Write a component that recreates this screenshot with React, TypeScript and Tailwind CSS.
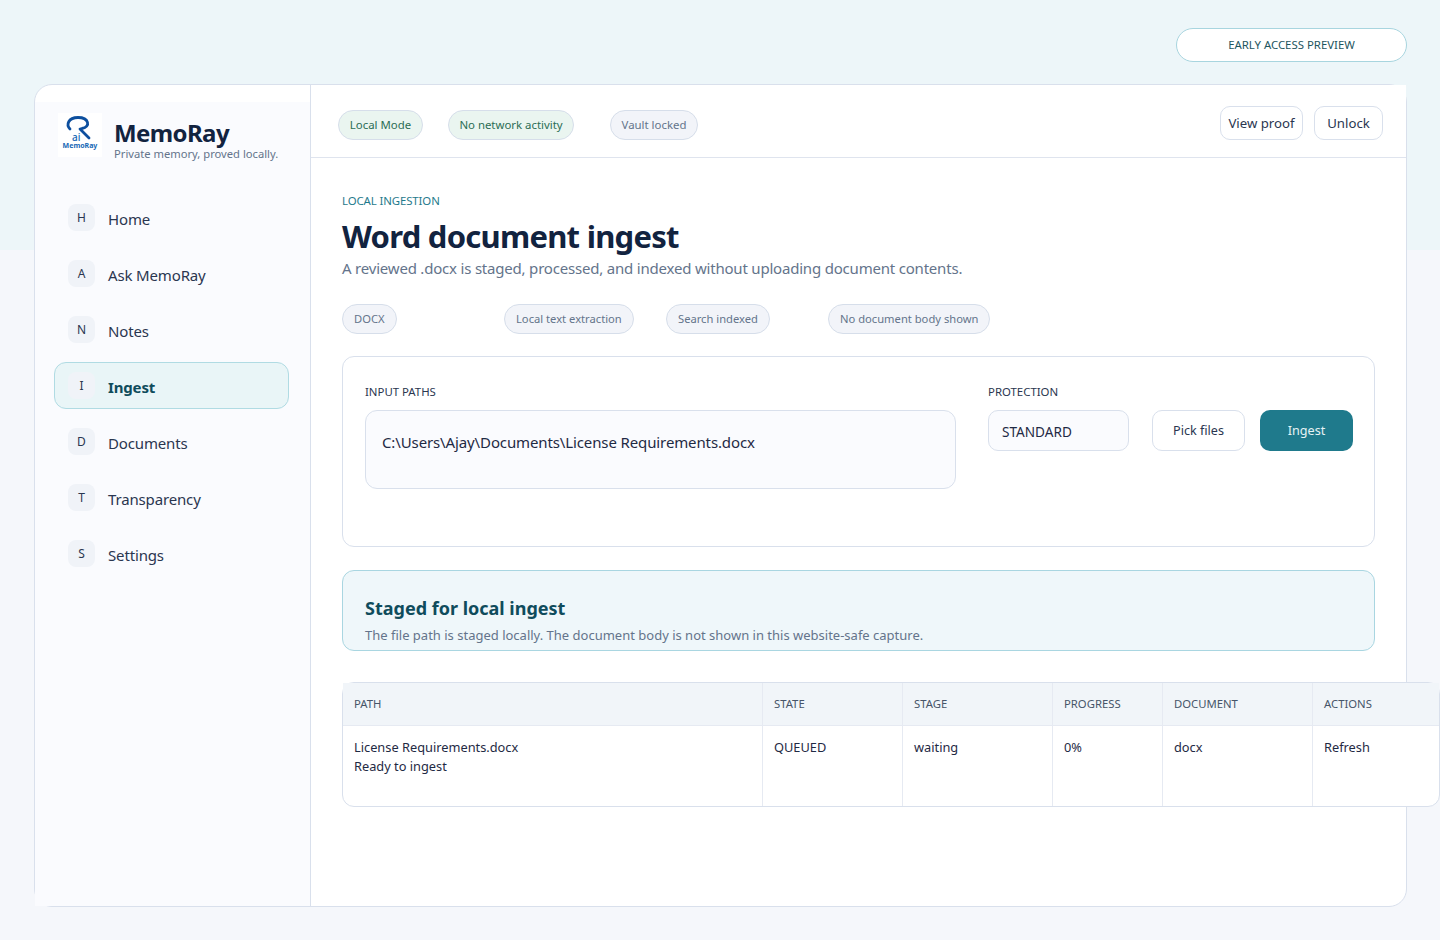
const font = { fontFamily: '"Noto Sans", "Open Sans", sans-serif' };

const navItems = [
  { key: "H", label: "Home" },
  { key: "A", label: "Ask MemoRay" },
  { key: "N", label: "Notes" },
  { key: "I", label: "Ingest", active: true },
  { key: "D", label: "Documents" },
  { key: "T", label: "Transparency" },
  { key: "S", label: "Settings" },
];

const chips = ["DOCX", "Local text extraction", "Search indexed", "No document body shown"];

const columns = [
  { head: "PATH", w: "w-[419px]" },
  { head: "STATE", w: "w-[140px]" },
  { head: "STAGE", w: "w-[150px]" },
  { head: "PROGRESS", w: "w-[110px]" },
  { head: "DOCUMENT", w: "w-[150px]" },
  { head: "ACTIONS", w: "flex-1" },
];

function Logo() {
  return (
    <svg viewBox="0 0 44 44" className="h-[44px] w-[44px] shrink-0 bg-white">
      <path
        d="M12 16 C8 12 10 4.5 20 4.5 C31 4.5 33 14 24 15.5 L22 16 L31 25"
        fill="none"
        stroke="#0d4f9e"
        strokeWidth="2.8"
        strokeLinecap="round"
        strokeLinejoin="round"
      />
      <text x="14" y="28" fontSize="10" fontWeight="500" fill="#1567b5" style={font}>
        ai
      </text>
      <text x="22" y="35" fontSize="7" fontWeight="700" fill="#1567b5" textAnchor="middle" style={font}>
        MemoRay
      </text>
    </svg>
  );
}

function Sidebar() {
  return (
    <aside className="flex w-[276px] shrink-0 flex-col border-r border-[#d9e0ec] pt-[17px]">
      <div className="flex-1 bg-[#fafbfe] pl-[19px] pr-[21px]">
        <div className="flex items-start pl-[4px] pt-[11px]">
          <Logo />
          <div className="ml-[12px]">
            <div className="mt-[4px] text-[24px] leading-[32px] font-bold tracking-[-0.6px] text-[#12233f]">MemoRay</div>
            <div className="-mt-[2px] whitespace-nowrap text-[11.2px] leading-[14px] text-[#64748b]">
              Private memory, proved locally.
            </div>
          </div>
        </div>
        <nav className="mt-[33px] flex flex-col gap-[9px]">
          {navItems.map((item) => (
            <div
              key={item.key}
              className={`flex h-[47px] items-center rounded-[12px] border pl-[13px] ${
                item.active ? "border-[#b0dbe3] bg-[#e9f5f7]" : "border-transparent"
              }`}
            >
              <span className="flex h-[27px] w-[27px] items-center justify-center rounded-[8px] bg-[#f0f3f8] text-[12px] text-[#2a3650]">
                {item.key}
              </span>
              <span
                className={`ml-[13px] mt-[3px] text-[15px] tracking-[-0.15px] ${
                  item.active ? "font-bold text-[#0f4c5c]" : "text-[#2a3650]"
                }`}
              >
                {item.label}
              </span>
            </div>
          ))}
        </nav>
      </div>
    </aside>
  );
}

function TopBar() {
  return (
    <header className="flex h-[73px] items-start justify-between border-b border-[#dfe4ee] bg-white pl-[27px] pr-[23px] pt-[21px]">
      <div className="mt-[4px] grid grid-cols-[110px_162px_auto] justify-items-start">
        <span className="flex h-[30px] w-[85px] items-center justify-center rounded-full border border-[#d6deea] bg-[#eaf5f0] text-[11.4px] text-[#2c6e55]">
          Local Mode
        </span>
        <span className="flex h-[30px] w-[126px] items-center justify-center rounded-full border border-[#d6deea] bg-[#eaf5f0] text-[11.4px] text-[#2c6e55]">
          No network activity
        </span>
        <span className="flex h-[30px] w-[88px] items-center justify-center rounded-full border border-[#d6deea] bg-[#f2f4f9] text-[11.4px] text-[#64748b]">
          Vault locked
        </span>
      </div>
      <div className="flex gap-[11px]">
        <button className="h-[34px] w-[83px] rounded-[10px] border border-[#d9e0ec] bg-white pt-[2px] text-[13.2px] text-[#2a3650]">
          View proof
        </button>
        <button className="h-[34px] w-[69px] rounded-[10px] border border-[#d9e0ec] bg-white pt-[2px] text-[13.2px] text-[#2a3650]">
          Unlock
        </button>
      </div>
    </header>
  );
}

function InputCard() {
  return (
    <section className="mt-[22px] flex h-[191px] rounded-[12px] border border-[#d9e0ec] bg-white pl-[22px] pr-[21px] pt-[27px]">
      <div className="w-[591px]">
        <div className="text-[11.4px] leading-[16px] text-[#2a3650]">INPUT PATHS</div>
        <div className="mt-[10px] h-[79px] rounded-[12px] border border-[#d9e0ec] bg-[#fafbfe] pl-[16px] pt-[20px] text-[15px] leading-[22px] tracking-[-0.12px] text-[#1f2a44]">
          C:\Users\Ajay\Documents\License Requirements.docx
        </div>
      </div>
      <div className="ml-[32px] w-[141px]">
        <div className="text-[11.4px] leading-[16px] text-[#2a3650]">PROTECTION</div>
        <div className="mt-[10px] flex h-[41px] items-center rounded-[10px] border border-[#d9e0ec] bg-[#fafbfe] pl-[13px] pt-[3px] text-[13.6px] text-[#1f2a44]">
          STANDARD
        </div>
      </div>
      <div className="ml-[23px] mt-[26px] flex items-start gap-[15px]">
        <button className="h-[41px] w-[93px] rounded-[10px] border border-[#d9e0ec] bg-white pt-[2px] text-[12.6px] text-[#2a3650]">
          Pick files
        </button>
        <button className="h-[41px] w-[93px] rounded-[10px] bg-[#1f7a8c] pt-[2px] text-[12.6px] text-[#e6f3f5]">
          Ingest
        </button>
      </div>
    </section>
  );
}

function QueueTable() {
  return (
    <div className="mt-[31px] w-[1098px] rounded-[12px] border border-[#d9e0ec] bg-white">
      <div className="flex h-[42px] bg-[#f1f5f9]">
        {columns.map((col, i) => (
          <div
            key={col.head}
            className={`${col.w} flex items-center pl-[11px] text-[11.3px] text-[#475569] ${
              i > 0 ? "border-l border-[#e6eaf2]" : ""
            }`}
          >
            {col.head}
          </div>
        ))}
      </div>
      <div className="flex h-[81px] border-t border-[#e6eaf2] text-[12.8px] leading-[19px] text-[#1f2a44]">
        <div className="w-[419px] pl-[11px] pt-[12px]">
          <div>License Requirements.docx</div>
          <div>Ready to ingest</div>
        </div>
        <div className="w-[140px] border-l border-[#e6eaf2] pl-[11px] pt-[12px]">QUEUED</div>
        <div className="w-[150px] border-l border-[#e6eaf2] pl-[11px] pt-[12px]">waiting</div>
        <div className="w-[110px] border-l border-[#e6eaf2] pl-[11px] pt-[12px]">0%</div>
        <div className="w-[150px] border-l border-[#e6eaf2] pl-[11px] pt-[12px]">docx</div>
        <div className="flex-1 border-l border-[#e6eaf2] pl-[11px] pt-[12px]">Refresh</div>
      </div>
    </div>
  );
}

export default function App() {
  return (
    <div
      className="h-[940px] w-[1440px] overflow-hidden bg-[linear-gradient(#edf6f9_0,#edf6f9_250px,#f5f7fb_250px)] pl-[34px] pt-[28px]"
      style={font}
    >
      <div className="flex w-[1373px] justify-end">
        <div className="flex h-[34px] w-[231px] items-center justify-center rounded-full border border-[#a8d5df] bg-white text-[11.4px] text-[#1d5560]">
          EARLY ACCESS PREVIEW
        </div>
      </div>
      <div className="mt-[22px] flex h-[823px] w-[1373px] rounded-[18px] border border-[#d9e0ec] bg-white">
        <Sidebar />
        <main className="min-w-0 flex-1">
          <TopBar />
          <div className="pl-[31px] pt-[35px]">
            <div className="text-[11.4px] leading-[16px] tracking-[-0.1px] text-[#1f7a8c]">LOCAL INGESTION</div>
            <h1 className="mt-[7px] text-[31px] leading-[40px] font-bold tracking-[-0.75px] text-[#12233f]">
              Word document ingest
            </h1>
            <p className="mt-[1px] text-[15px] leading-[22px] tracking-[-0.2px] text-[#64748b]">
              A reviewed .docx is staged, processed, and indexed without uploading document contents.
            </p>
            <div className="mt-[25px] grid w-[1033px] grid-cols-[162px_162px_162px_auto] justify-items-start">
              {chips.map((chip) => (
                <span
                  key={chip}
                  className="flex h-[30px] items-center rounded-full border border-[#d6deea] bg-[#f2f4f9] px-[11px] text-[11.2px] text-[#64748b]"
                >
                  {chip}
                </span>
              ))}
            </div>
            <div className="w-[1033px]">
              <InputCard />
              <section className="mt-[23px] h-[81px] rounded-[12px] border border-[#a9d6e1] bg-[#eff7fa] pl-[22px] pt-[23px]">
                <div className="text-[18px] leading-[28px] font-bold text-[#0f4c5c]">Staged for local ingest</div>
                <div className="mt-[4px] text-[13px] leading-[18px] text-[#64748b]">
                  The file path is staged locally. The document body is not shown in this website-safe capture.
                </div>
              </section>
            </div>
            <QueueTable />
          </div>
        </main>
      </div>
    </div>
  );
}
